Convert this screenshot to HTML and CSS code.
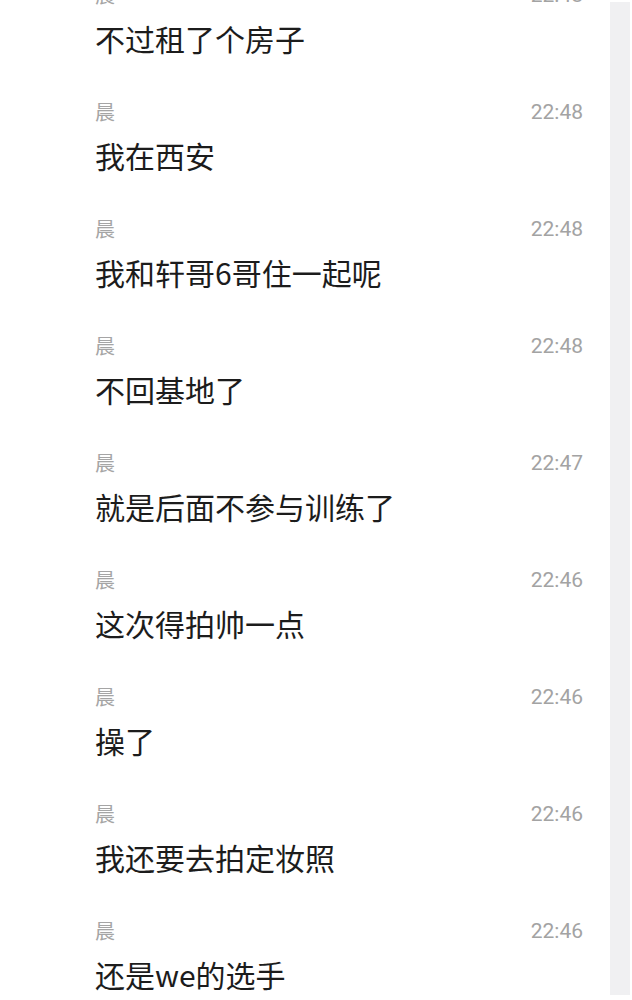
FILE: index.html
```html
<!DOCTYPE html>
<html lang="zh">
<head>
<meta charset="utf-8">
<link rel="stylesheet" href="styles.css">
</head>
<body>
<div class="page">
  <div class="chat">
    <div class="msg"><div class="head"><span class="name">晨</span><span class="time">22:48</span></div><div class="text">不过租了个房子</div></div>
    <div class="msg"><div class="head"><span class="name">晨</span><span class="time">22:48</span></div><div class="text">我在西安</div></div>
    <div class="msg"><div class="head"><span class="name">晨</span><span class="time">22:48</span></div><div class="text">我和轩哥6哥住一起呢</div></div>
    <div class="msg"><div class="head"><span class="name">晨</span><span class="time">22:48</span></div><div class="text">不回基地了</div></div>
    <div class="msg"><div class="head"><span class="name">晨</span><span class="time">22:47</span></div><div class="text">就是后面不参与训练了</div></div>
    <div class="msg"><div class="head"><span class="name">晨</span><span class="time">22:46</span></div><div class="text">这次得拍帅一点</div></div>
    <div class="msg"><div class="head"><span class="name">晨</span><span class="time">22:46</span></div><div class="text">操了</div></div>
    <div class="msg"><div class="head"><span class="name">晨</span><span class="time">22:46</span></div><div class="text">我还要去拍定妆照</div></div>
    <div class="msg"><div class="head"><span class="name">晨</span><span class="time">22:46</span></div><div class="text">还是we的选手</div></div>
  </div>
  <div class="strip"></div>
</div>
</body>
</html>
```

FILE: styles.css
```css
html, body {
  margin: 0;
  padding: 0;
  background: #ffffff;
  height: 1000px;
  overflow: hidden;
}
.page {
  display: flex;
  width: 632px;
  height: 1000px;
}
.chat {
  width: 610px;
  box-sizing: border-box;
  padding: 0 27px 0 95px;
  margin-top: -17px;
}
.msg {
  display: flex;
  flex-direction: column;
  height: 117px;
}
.head {
  display: flex;
  justify-content: space-between;
  align-items: center;
  height: 24px;
}
.name {
  font-family: "Noto Sans CJK SC", sans-serif;
  font-size: 20px;
  color: #a5a5a5;
  line-height: 24px;
}
.time {
  font-family: "Roboto", "Liberation Sans", sans-serif;
  font-size: 21px;
  color: #a3a3a3;
  line-height: 24px;
}
.text {
  margin-top: 11px;
  font-family: "Noto Sans CJK SC", sans-serif;
  font-size: 30px;
  line-height: 40px;
  color: #1c1c1c;
}
.strip {
  width: 20px;
  margin: 2px 0 5px 0;
  background: #f0f0f2;
}
```
